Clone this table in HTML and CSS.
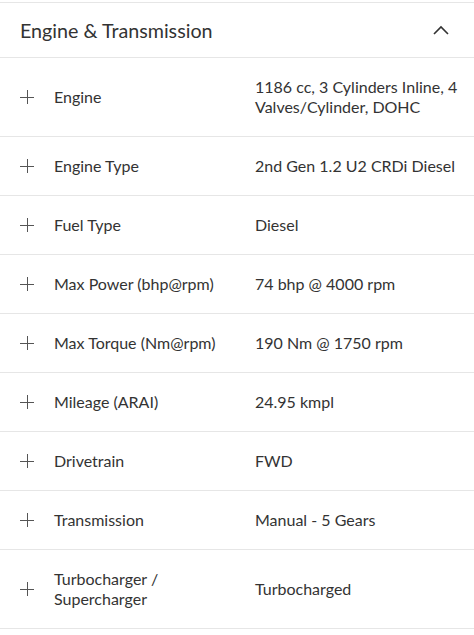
FILE: index.html
```html
<!DOCTYPE html>
<html lang="en">
<head>
    <meta charset="UTF-8">
    <meta name="viewport" content="width=device-width, initial-scale=1.0">
    <title>Engine &amp; Transmission</title>
    <link rel="stylesheet" href="styles.css">
</head>
<body>
    <section class="spec-section">
        <div class="spec-head">
            <h2>Engine &amp; Transmission</h2>
            <svg class="chevron" width="16" height="10" viewBox="0 0 16 10">
                <path d="M1 9 L8 2 L15 9" fill="none" stroke="#333" stroke-width="1.6"/>
            </svg>
        </div>
        <ul class="spec-list">
            <li class="spec-row"><span class="plus"></span><span class="label">Engine</span><span class="value">1186 cc, 3 Cylinders Inline, 4 Valves/Cylinder, DOHC</span></li>
            <li class="spec-row"><span class="plus"></span><span class="label">Engine Type</span><span class="value">2nd Gen 1.2 U2 CRDi Diesel</span></li>
            <li class="spec-row"><span class="plus"></span><span class="label">Fuel Type</span><span class="value">Diesel</span></li>
            <li class="spec-row"><span class="plus"></span><span class="label">Max Power (bhp@rpm)</span><span class="value">74 bhp @ 4000 rpm</span></li>
            <li class="spec-row"><span class="plus"></span><span class="label">Max Torque (Nm@rpm)</span><span class="value">190 Nm @ 1750 rpm</span></li>
            <li class="spec-row"><span class="plus"></span><span class="label">Mileage (ARAI)</span><span class="value">24.95 kmpl</span></li>
            <li class="spec-row"><span class="plus"></span><span class="label">Drivetrain</span><span class="value">FWD</span></li>
            <li class="spec-row"><span class="plus"></span><span class="label">Transmission</span><span class="value">Manual - 5 Gears</span></li>
            <li class="spec-row"><span class="plus"></span><span class="label">Turbocharger /<br>Supercharger</span><span class="value">Turbocharged</span></li>
        </ul>
    </section>
</body>
</html>
```

FILE: styles.css
```css
* {
    margin: 0;
    padding: 0;
    box-sizing: border-box;
}

body {
    background-color: #fff;
    font-family: Lato, "Open Sans", sans-serif;
    color: #333;
    padding-top: 2px;
}

.spec-section {
    border-top: 1px solid #e6e6e6;
}

.spec-head {
    display: flex;
    align-items: center;
    justify-content: space-between;
    height: 55px;
    padding: 0 25px 0 20px;
    border-bottom: 1px solid #e6e6e6;
}

.spec-head h2 {
    font-size: 19.7px;
    font-weight: 400;
    color: #333;
}

.spec-list {
    list-style: none;
}

.spec-row {
    display: grid;
    grid-template-columns: 14px 181px 1fr;
    column-gap: 20px;
    align-items: center;
    padding: 19px 4px 19px 20px;
    border-bottom: 1px solid #e6e6e6;
    font-size: 16px;
    line-height: 20px;
}

.plus {
    position: relative;
    width: 14px;
    height: 14px;
}

.plus::before,
.plus::after {
    content: "";
    position: absolute;
    background-color: #555;
}

.plus::before {
    left: 0;
    top: 6.5px;
    width: 14px;
    height: 1.2px;
}

.plus::after {
    left: 6.5px;
    top: 0;
    width: 1.2px;
    height: 14px;
}

.label,
.value {
    color: #333;
}
```
